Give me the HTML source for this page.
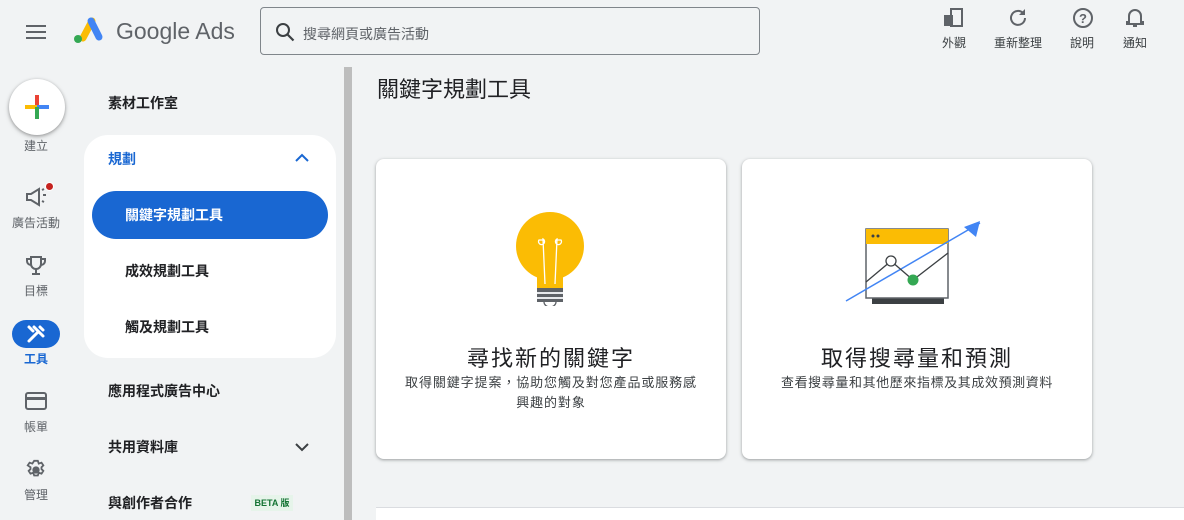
<!DOCTYPE html>
<html><head><meta charset="utf-8"><style>
*{margin:0;padding:0;box-sizing:border-box}
body{width:1184px;height:520px;overflow:hidden;background:#f1f3f4;font-family:"Liberation Sans","Noto Sans CJK TC",sans-serif;color:#202124;position:relative}
.a{position:absolute}
.rl{position:absolute;width:72px;text-align:center;font-size:12px;color:#5f6368}
.nav{position:absolute;font-size:14px;font-weight:bold;color:#202124}
.card{position:absolute;background:#fff;border-radius:8px;box-shadow:0 1px 2px rgba(60,64,67,.3),0 1px 3px 1px rgba(60,64,67,.15)}
.tb{position:absolute;top:34px;font-size:12px;color:#3c4043;text-align:center;width:60px}
</style></head><body>
<svg class="a" style="left:26px;top:24px" width="20" height="16"><path d="M0 2h20M0 8h20M0 14h20" stroke="#5f6368" stroke-width="2"/></svg>
<svg class="a" style="left:72px;top:16px" width="32" height="28" viewBox="0 0 32 28"><path d="M11 22L20 5" stroke="#fbbc04" stroke-width="7" stroke-linecap="round"/><path d="M19 5l8 16" stroke="#4285f4" stroke-width="7" stroke-linecap="round"/><circle cx="6" cy="23" r="4" fill="#34a853"/></svg>
<div class="a" style="left:116px;top:18px;font-size:23px;color:#5f6368">Google Ads</div>
<div class="a" style="left:260px;top:7px;width:500px;height:48px;border:1px solid #80868b;border-radius:4px"></div>
<svg class="a" style="left:275px;top:22px" width="20" height="20"><circle cx="8" cy="8" r="6" fill="none" stroke="#3c4043" stroke-width="2"/><path d="M12.5 12.5l6 6" stroke="#3c4043" stroke-width="2.2"/></svg>
<div class="a" style="left:303px;top:24px;font-size:14px;color:#5f6368">搜尋網頁或廣告活動</div>
<svg class="a" style="left:943px;top:8px" width="22" height="20"><rect x="1" y="7" width="9" height="11" fill="#5f6368"/><rect x="8" y="1" width="11" height="17" fill="none" stroke="#5f6368" stroke-width="2"/></svg>
<svg class="a" style="left:1008px;top:7px" width="20" height="20"><path d="M15 6A7 7 0 1 0 17 11" fill="none" stroke="#5f6368" stroke-width="2"/><path d="M17 2v6h-6z" fill="#5f6368"/></svg>
<svg class="a" style="left:1072px;top:7px" width="22" height="22"><circle cx="11" cy="11" r="9" fill="none" stroke="#5f6368" stroke-width="2"/><text x="11" y="16" font-size="13" font-family="Liberation Sans" text-anchor="middle" fill="#5f6368" font-weight="bold">?</text></svg>
<svg class="a" style="left:1125px;top:6px" width="20" height="22"><path d="M4 16V10a6 6 0 0 1 12 0v6h2v2H2v-2z" fill="none" stroke="#5f6368" stroke-width="2"/><path d="M8 20h4" stroke="#5f6368" stroke-width="2"/></svg>
<div class="tb" style="left:924px">外觀</div>
<div class="tb" style="left:988px">重新整理</div>
<div class="tb" style="left:1052px">說明</div>
<div class="tb" style="left:1105px">通知</div>
<div class="a" style="left:9px;top:79px;width:56px;height:56px;border-radius:50%;background:#fff;box-shadow:0 1px 3px rgba(0,0,0,.3),0 2px 6px rgba(0,0,0,.15)"></div>
<svg class="a" style="left:25px;top:95px" width="24" height="24"><rect x="10" y="0" width="4" height="12" fill="#ea4335"/><rect x="0" y="10" width="12" height="4" fill="#fbbc04"/><rect x="12" y="10" width="12" height="4" fill="#4285f4"/><rect x="10" y="12" width="4" height="12" fill="#34a853"/></svg>
<div class="rl" style="left:0;top:137px">建立</div>
<svg class="a" style="left:25px;top:186px" width="24" height="22"><path d="M2 8h4l8-5v16l-8-5H2z" fill="none" stroke="#5f6368" stroke-width="2"/><path d="M18 9h3M17 4l2-1M17 15l2 1" stroke="#5f6368" stroke-width="2"/></svg>
<div class="a" style="left:45px;top:182px;width:9px;height:9px;border-radius:50%;background:#c5221f;border:1px solid #fff"></div>
<div class="rl" style="left:0;top:214px">廣告活動</div>
<svg class="a" style="left:26px;top:255px" width="20" height="22"><path d="M5 2h10v7a5 5 0 0 1-10 0z" fill="none" stroke="#5f6368" stroke-width="2"/><path d="M5 4H1v2a4 4 0 0 0 4 4M15 4h4v2a4 4 0 0 1-4 4M10 14v4M6 19h8" fill="none" stroke="#5f6368" stroke-width="2"/></svg>
<div class="rl" style="left:0;top:282px">目標</div>
<div class="a" style="left:12px;top:320px;width:48px;height:28px;border-radius:14px;background:#1967d2"></div>
<svg class="a" style="left:26px;top:324px" width="20" height="20"><path d="M3 17L12 8M8 3l9 9M14 3l3 3M3 3l4 4" stroke="#fff" stroke-width="3" stroke-linecap="round"/></svg>
<div class="rl" style="left:0;top:350px;color:#1967d2;font-weight:bold">工具</div>
<svg class="a" style="left:25px;top:392px" width="22" height="18"><rect x="1" y="1" width="20" height="16" rx="2" fill="none" stroke="#5f6368" stroke-width="2"/><rect x="1" y="5" width="20" height="3" fill="#5f6368"/></svg>
<div class="rl" style="left:0;top:418px">帳單</div>
<svg class="a" style="left:25px;top:459px" width="22" height="22" viewBox="0 0 24 24"><path d="M12 8a4 4 0 1 0 0 8a4 4 0 1 0 0-8z" fill="#5f6368"/><path d="M10 2h4l1 3 3-1 2 3-2 2v2l2 2-2 3-3-1-1 3h-4l-1-3-3 1-2-3 2-2v-2L3 7l2-3 3 1z" fill="none" stroke="#5f6368" stroke-width="2"/></svg>
<div class="rl" style="left:0;top:486px">管理</div>
<div class="nav" style="left:108px;top:93px">素材工作室</div>
<div class="a" style="left:84px;top:135px;width:252px;height:223px;background:#fff;border-radius:24px"></div>
<div class="nav" style="left:108px;top:149px;color:#1967d2">規劃</div>
<svg class="a" style="left:294px;top:153px" width="16" height="10"><path d="M2 8l6-6 6 6" fill="none" stroke="#1967d2" stroke-width="2"/></svg>
<div class="a" style="left:92px;top:191px;width:236px;height:48px;border-radius:24px;background:#1967d2"></div>
<div class="nav" style="left:125px;top:205px;color:#fff">關鍵字規劃工具</div>
<div class="nav" style="left:125px;top:261px">成效規劃工具</div>
<div class="nav" style="left:125px;top:317px">觸及規劃工具</div>
<div class="nav" style="left:108px;top:381px">應用程式廣告中心</div>
<div class="nav" style="left:108px;top:437px">共用資料庫</div>
<svg class="a" style="left:294px;top:442px" width="16" height="10"><path d="M2 2l6 6 6-6" fill="none" stroke="#3c4043" stroke-width="2"/></svg>
<div class="nav" style="left:108px;top:493px">與創作者合作</div>
<div class="a" style="left:251px;top:495px;width:42px;height:16px;background:#e6f4ea;color:#137333;font-size:9px;font-weight:bold;line-height:16px;text-align:center">BETA 版</div>
<div class="a" style="left:344px;top:67px;width:8px;height:453px;background:#bdbdbd"></div>
<div class="a" style="left:377px;top:72px;font-size:22px;color:#202124">關鍵字規劃工具</div>
<div class="card" style="left:376px;top:159px;width:350px;height:300px"></div>
<div class="card" style="left:742px;top:159px;width:350px;height:300px"></div>
<svg class="a" style="left:510px;top:210px" width="80" height="96"><circle cx="40" cy="36" r="34" fill="#fbbc04"/><rect x="27" y="50" width="26" height="30" fill="#fbbc04"/><path d="M35 74L33 29a3 3 0 1 1-4 1h4M45 74L47 29a3 3 0 1 0 4 1h-4" fill="none" stroke="#fff" stroke-width="1.3"/><rect x="27" y="78" width="26" height="14" fill="#5f6368"/><path d="M27 83h26M27 88h26" stroke="#e8eaed" stroke-width="2"/><path d="M34 92a6 5 0 0 0 12 0" fill="none" stroke="#5f6368" stroke-width="1.3"/></svg>
<div class="a" style="left:376px;top:341px;width:350px;text-align:center;font-size:22px;letter-spacing:2px">尋找新的關鍵字</div>
<div class="a" style="left:400px;top:373px;width:302px;text-align:center;font-size:13px;line-height:20px;color:#3c4043;letter-spacing:0.9px">取得關鍵字提案，協助您觸及對您產品或服務感興趣的對象</div>
<svg class="a" style="left:840px;top:215px" width="145" height="95"><rect x="32" y="83" width="72" height="6" fill="#3c4043"/><rect x="26" y="14" width="82" height="69" fill="#fff" stroke="#5f6368" stroke-width="1.5"/><rect x="26" y="14" width="82" height="15" fill="#fbbc04"/><circle cx="33" cy="21" r="1.5" fill="#3c4043"/><circle cx="38" cy="21" r="1.5" fill="#3c4043"/><path d="M6 86L140 8" stroke="#4285f4" stroke-width="1.5"/><path d="M140 6l-4 16-12-10z" fill="#4285f4"/><path d="M26 67L51 46 73 65 108 38" fill="none" stroke="#3c4043" stroke-width="1.3"/><circle cx="51" cy="46" r="5" fill="#fff" stroke="#3c4043" stroke-width="1.3"/><circle cx="73" cy="65" r="5.5" fill="#34a853"/></svg>
<div class="a" style="left:742px;top:341px;width:350px;text-align:center;font-size:22px;letter-spacing:2px">取得搜尋量和預測</div>
<div class="a" style="left:742px;top:373px;width:350px;text-align:center;font-size:13px;line-height:20px;color:#3c4043;letter-spacing:0.6px">查看搜尋量和其他歷來指標及其成效預測資料</div>
<div class="a" style="left:376px;top:507px;width:808px;height:13px;background:#fff;border-top:1px solid #dadce0"></div>
</body></html>
